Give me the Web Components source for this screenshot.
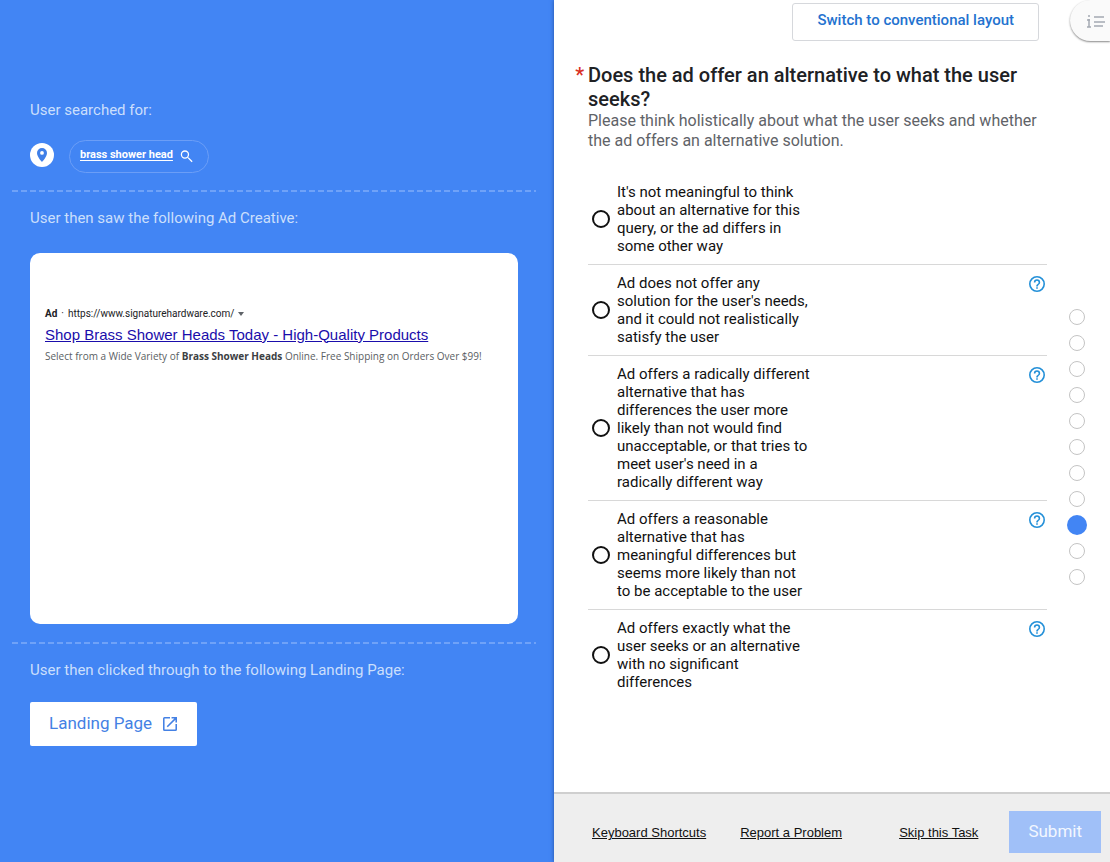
<!DOCTYPE html>
<html lang="en">
<head>
<meta charset="utf-8">
<meta name="viewport" content="width=device-width, initial-scale=1">
<title>Ad rating task</title>
<style>
  html, body { margin: 0; height: 100%; }
  body { font: 16px/20px Roboto, "Liberation Sans", sans-serif; color: #111; background: #fff; }
</style>
</head>
<body>
<rating-app></rating-app>

<script>
const define = (name, html, setup) => {
  const template = document.createElement('template');
  template.innerHTML = html;
  customElements.define(name, class extends HTMLElement {
    constructor() {
      super();
      this.attachShadow({ mode: 'open' }).append(template.content.cloneNode(true));
    }
    connectedCallback() { if (setup) setup(this, this.shadowRoot); }
  });
};

define('context-section', `
  <style>
    :host { display: block; padding: 16px 18px 18px; }
    :host([divided]) { border-top: 2px solid transparent;
      background: repeating-linear-gradient(90deg, #6fa2f8 0 6px, transparent 6px 9px) border-box 0 0 / 100% 2px no-repeat;
      background-origin: border-box; }
    h2 { margin: 0 0 var(--label-gap, 20px); font-size: 15px; line-height: 20px; font-weight: 400; color: #cbdffc; }
  </style>
  <h2></h2><slot></slot>`,
  (el, root) => { root.querySelector('h2').textContent = el.getAttribute('label'); });

define('search-query', `
  <style>
    :host { display: flex; align-items: center; gap: 15px; }
    .pin { width: 24px; height: 24px; flex: none; margin-bottom: 2px; }
    .pill { display: flex; align-items: center; gap: 7px; box-sizing: border-box; height: 33px;
      padding: 0 14px 0 10px; border: 1px solid #6b9ef7; border-radius: 17px; }
    a { font-size: 11px; line-height: 16px; font-weight: 700; color: #fff; text-underline-offset: 2px; margin-bottom: 2px; }
    .pill svg { width: 14px; height: 14px; }
  </style>
  <svg class="pin" viewBox="0 0 24 24" aria-hidden="true">
    <circle cx="12" cy="12" r="12" fill="#fff"/>
    <path fill="#3f7fe8" fill-rule="evenodd" d="M12 5a5 5 0 0 0-5 5c0 3.700 5 9 5 9s5-5.300 5-9a5 5 0 0 0-5-5zm0 6.800a1.900 1.900 0 1 1 0-3.800 1.900 1.900 0 0 1 0 3.800z"/>
  </svg>
  <div class="pill"><a href="#search"><slot></slot></a>
    <svg viewBox="0 0 24 24" aria-hidden="true"><path fill="#fff" d="M15.500 14h-.79l-.28-.27A6.470 6.470 0 0 0 16 9.500 6.500 6.500 0 1 0 9.500 16c1.610 0 3.090-.59 4.230-1.570l.27.28v.79l6 6L21.500 20zm-6 0a4.500 4.500 0 1 1 0-9 4.500 4.500 0 0 1 0 9z" transform="translate(-2 -1) scale(1.100)"/></svg>
  </div>`);

define('ad-creative', `
  <style>
    :host { display: block; box-sizing: border-box; min-height: 371px; padding: 53px 15px 16px; border-radius: 10px;
      background: #fff; font-family: "Liberation Sans", Arial, sans-serif; }
    .source { display: flex; align-items: center; gap: 4px; font: 10px/16px Roboto, sans-serif; color: #202124; }
    .arrow { border: 3px solid transparent; border-top: 4px solid #5f6368; border-bottom: 0; }
    a { display: block; width: fit-content; font-size: 15px; line-height: 20px; margin: 3px 0; color: #1a0dab; text-decoration: underline; }
    p { margin: 0; font: 10px/16px "Open Sans", sans-serif; color: #5a5e63; }
    ::slotted(b) { color: #3c4043; }
  </style>
  <div class="source"><b>Ad</b><span>·</span><span><slot name="url"></slot></span><span class="arrow"></span></div>
  <a href="#ad"><slot name="title"></slot></a>
  <p><slot></slot></p>`);

define('landing-button', `
  <style>
    :host { display: block; }
    button { display: flex; align-items: center; gap: 11px; height: 44px; padding: 0 20px 2px 19px; border: 0; border-radius: 2px;
      background: #fff; color: #4481e4; font: 17px/24px Roboto, sans-serif; }
    svg { width: 14px; height: 14px; margin-top: 2px; }
  </style>
  <button type="button"><slot></slot>
    <svg viewBox="3 3 18 18" aria-hidden="true"><path fill="currentColor" d="M19 19H5V5h7V3H5a2 2 0 0 0-2 2v14a2 2 0 0 0 2 2h14a2 2 0 0 0 2-2v-7h-2zM14 3v2h3.590l-9.830 9.830 1.410 1.410L19 6.410V10h2V3z"/></svg>
  </button>`);

define('context-panel', `
  <style>
    :host { display: flex; flex-direction: column; justify-content: center; box-sizing: border-box; min-height: 100%;
      padding: 0 18px 15px 12px; background: #4285f4; }
    context-section:first-of-type { padding-bottom: 17px; }
    context-section:last-child { --label-gap: 22px; }
    context-section:nth-of-type(2) { --label-gap: 25px; }
  </style>
  <context-section label="User searched for:"><search-query>brass shower head</search-query></context-section>
  <context-section divided label="User then saw the following Ad Creative:">
    <ad-creative>
      <span slot="url">https://www.signaturehardware.com/</span>
      <span slot="title">Shop Brass Shower Heads Today - High-Quality Products</span>
      Select from a Wide Variety of <b>Brass Shower Heads</b> Online. Free Shipping on Orders Over $99!
    </ad-creative>
  </context-section>
  <context-section divided label="User then clicked through to the following Landing Page:"><landing-button>Landing Page</landing-button></context-section>`);

define('answer-option', `
  <style>
    :host { display: flex; align-items: flex-start; justify-content: space-between; padding: 9px 2px 9px 4px; }
    :host(:not(:first-of-type)) { border-top: 1px solid #d8d8d8; }
    label { display: flex; align-items: center; gap: 7px; font-size: 15px; line-height: 18px; color: #111; }
    label span { width: 194px; }
    input { appearance: none; flex: none; box-sizing: border-box; width: 18px; height: 18px; margin: 0; border: 2px solid #111; border-radius: 50%; }
    input:checked { background: radial-gradient(#111 0 4px, transparent 5px); }
    button { display: none; width: 16px; height: 16px; margin: 2px 0 0; padding: 0; border: 0; background: none; color: #2490d8; }
    :host([help]) button { display: block; }
    svg { display: block; }
  </style>
  <label><input type="radio" name="answer"><span><slot></slot></span></label>
  <button type="button" aria-label="Help"><svg width="16" height="16" viewBox="2 2 20 20" aria-hidden="true"><path fill="currentColor" d="M11 18h2v-2h-2zm1-16a10 10 0 1 0 0 20 10 10 0 0 0 0-20zm0 18a8 8 0 1 1 0-16 8 8 0 0 1 0 16zm0-14a4 4 0 0 0-4 4h2a2 2 0 1 1 4 0c0 2-3 1.750-3 5h2c0-2.250 3-2.500 3-5a4 4 0 0 0-4-4z"/></svg></button>`);

define('question-card', `
  <style>
    :host { display: block; padding-left: 34px; }
    h1 { position: relative; margin: 0; font-size: 20px; line-height: 24px; font-weight: 500; color: #202124; }
    h1::before { content: "*"; position: absolute; right: 100%; margin-right: 4px; color: #d93025; }
    p { margin: 0 0 23px; color: #5f6368; }
    fieldset { margin: 0; padding: 0; border: 0; min-width: 0; }
  </style>
  <h1>Does the ad offer an alternative to what the user seeks?</h1>
  <p>Please think holistically about what the user seeks and whether the ad offers an alternative solution.</p>
  <fieldset aria-label="Answer">
    <answer-option>It's not meaningful to think about an alternative for this query, or the ad differs in some other way</answer-option>
    <answer-option help>Ad does not offer any solution for the user's needs, and it could not realistically satisfy the user</answer-option>
    <answer-option help>Ad offers a radically different alternative that has differences the user more likely than not would find unacceptable, or that tries to meet user's need in a radically different way</answer-option>
    <answer-option help>Ad offers a reasonable alternative that has meaningful differences but seems more likely than not to be acceptable to the user</answer-option>
    <answer-option help>Ad offers exactly what the user seeks or an alternative with no significant differences</answer-option>
  </fieldset>`);

define('step-dots', `
  <style>
    :host { display: flex; flex-direction: column; align-items: center; gap: 10px; width: 20px; }
    button { box-sizing: border-box; width: 16px; height: 16px; padding: 0; border: 1px solid #c4c4c4; border-radius: 50%; background: #fff; }
    button[aria-current] { width: 20px; height: 20px; margin: -2px 0; border: 0; background: #4285f4; }
  </style>`,
  (el, root) => {
    for (let i = 1; i <= +el.getAttribute('count'); i++) {
      const dot = document.createElement('button');
      dot.type = 'button';
      dot.setAttribute('aria-label', 'Question ' + i);
      if (i === +el.getAttribute('current')) dot.setAttribute('aria-current', 'step');
      root.append(dot);
    }
  });

define('outline-tab', `
  <style>
    :host { display: block; }
    button { display: flex; align-items: center; box-sizing: border-box; width: 40px; height: 41px; padding: 0 0 0 17px; border: 0;
      border-radius: 21px 0 0 21px; background: #fafafa; box-shadow: 0 1px 2px #888; }
  </style>
  <button type="button" aria-label="Outline">
    <svg width="18" height="14" viewBox="0 0 18 14" fill="none" stroke="#a4a9b2" stroke-width="2" aria-hidden="true"><path d="M0 6h3M2 5v8M0 13h4M2 1v2M7 3h10M7 8h11M7 12h9" stroke-width="1.500"/></svg>
  </button>`);

define('task-footer', `
  <style>
    :host { display: flex; align-items: center; box-sizing: border-box; min-height: 70px; padding: 8px 9px 0 38px;
      border-top: 2px solid #cfcfcf; background: #eee; }
    a { padding-top: 2px; font: 13px/16px "Liberation Sans", Arial, sans-serif; color: #111; white-space: nowrap; }
    .links { display: flex; gap: 34px; flex: 1; }
    button { height: 42px; margin-left: 31px; padding: 0 19px 2px; border: 0; background: #a0c0f8; color: #f2f7ff; font: 17px/24px Roboto, sans-serif; }
  </style>
  <div class="links"><a href="#shortcuts">Keyboard Shortcuts</a><a href="#report">Report a Problem</a></div>
  <a href="#skip">Skip this Task</a>
  <button type="submit" disabled>Submit</button>`);

define('question-panel', `
  <style>
    :host { display: flex; flex-direction: column; min-height: 100%; background: #fff; position: relative;
      box-shadow: 0 0 4px #2450a0; }
    main { flex: 1; display: grid; grid-template-columns: 1fr 20px; column-gap: 20px; padding-right: 23px; }
    .switch { display: block; box-sizing: border-box; height: 38px; margin: 3px 8px 22px auto; padding: 0 24px 4px;
      border: 1px solid #d6d8dc; border-radius: 3px; background: #fff; color: #2472cf; font: 500 15px/20px Roboto, sans-serif; }
    step-dots { align-self: center; padding-top: 102px; }
    outline-tab { position: absolute; top: 0; right: 0; }
  </style>
  <main>
    <div><button class="switch" type="button">Switch to conventional layout</button><question-card></question-card></div>
    <step-dots count="11" current="9"></step-dots>
  </main>
  <outline-tab></outline-tab>
  <task-footer></task-footer>`);

define('rating-app', `
  <style>
    :host { display: grid; grid-template-columns: calc(50% - 1px) 1fr; min-height: 100vh; }
  </style>
  <context-panel></context-panel>
  <question-panel></question-panel>`);
</script>
</body>
</html>
